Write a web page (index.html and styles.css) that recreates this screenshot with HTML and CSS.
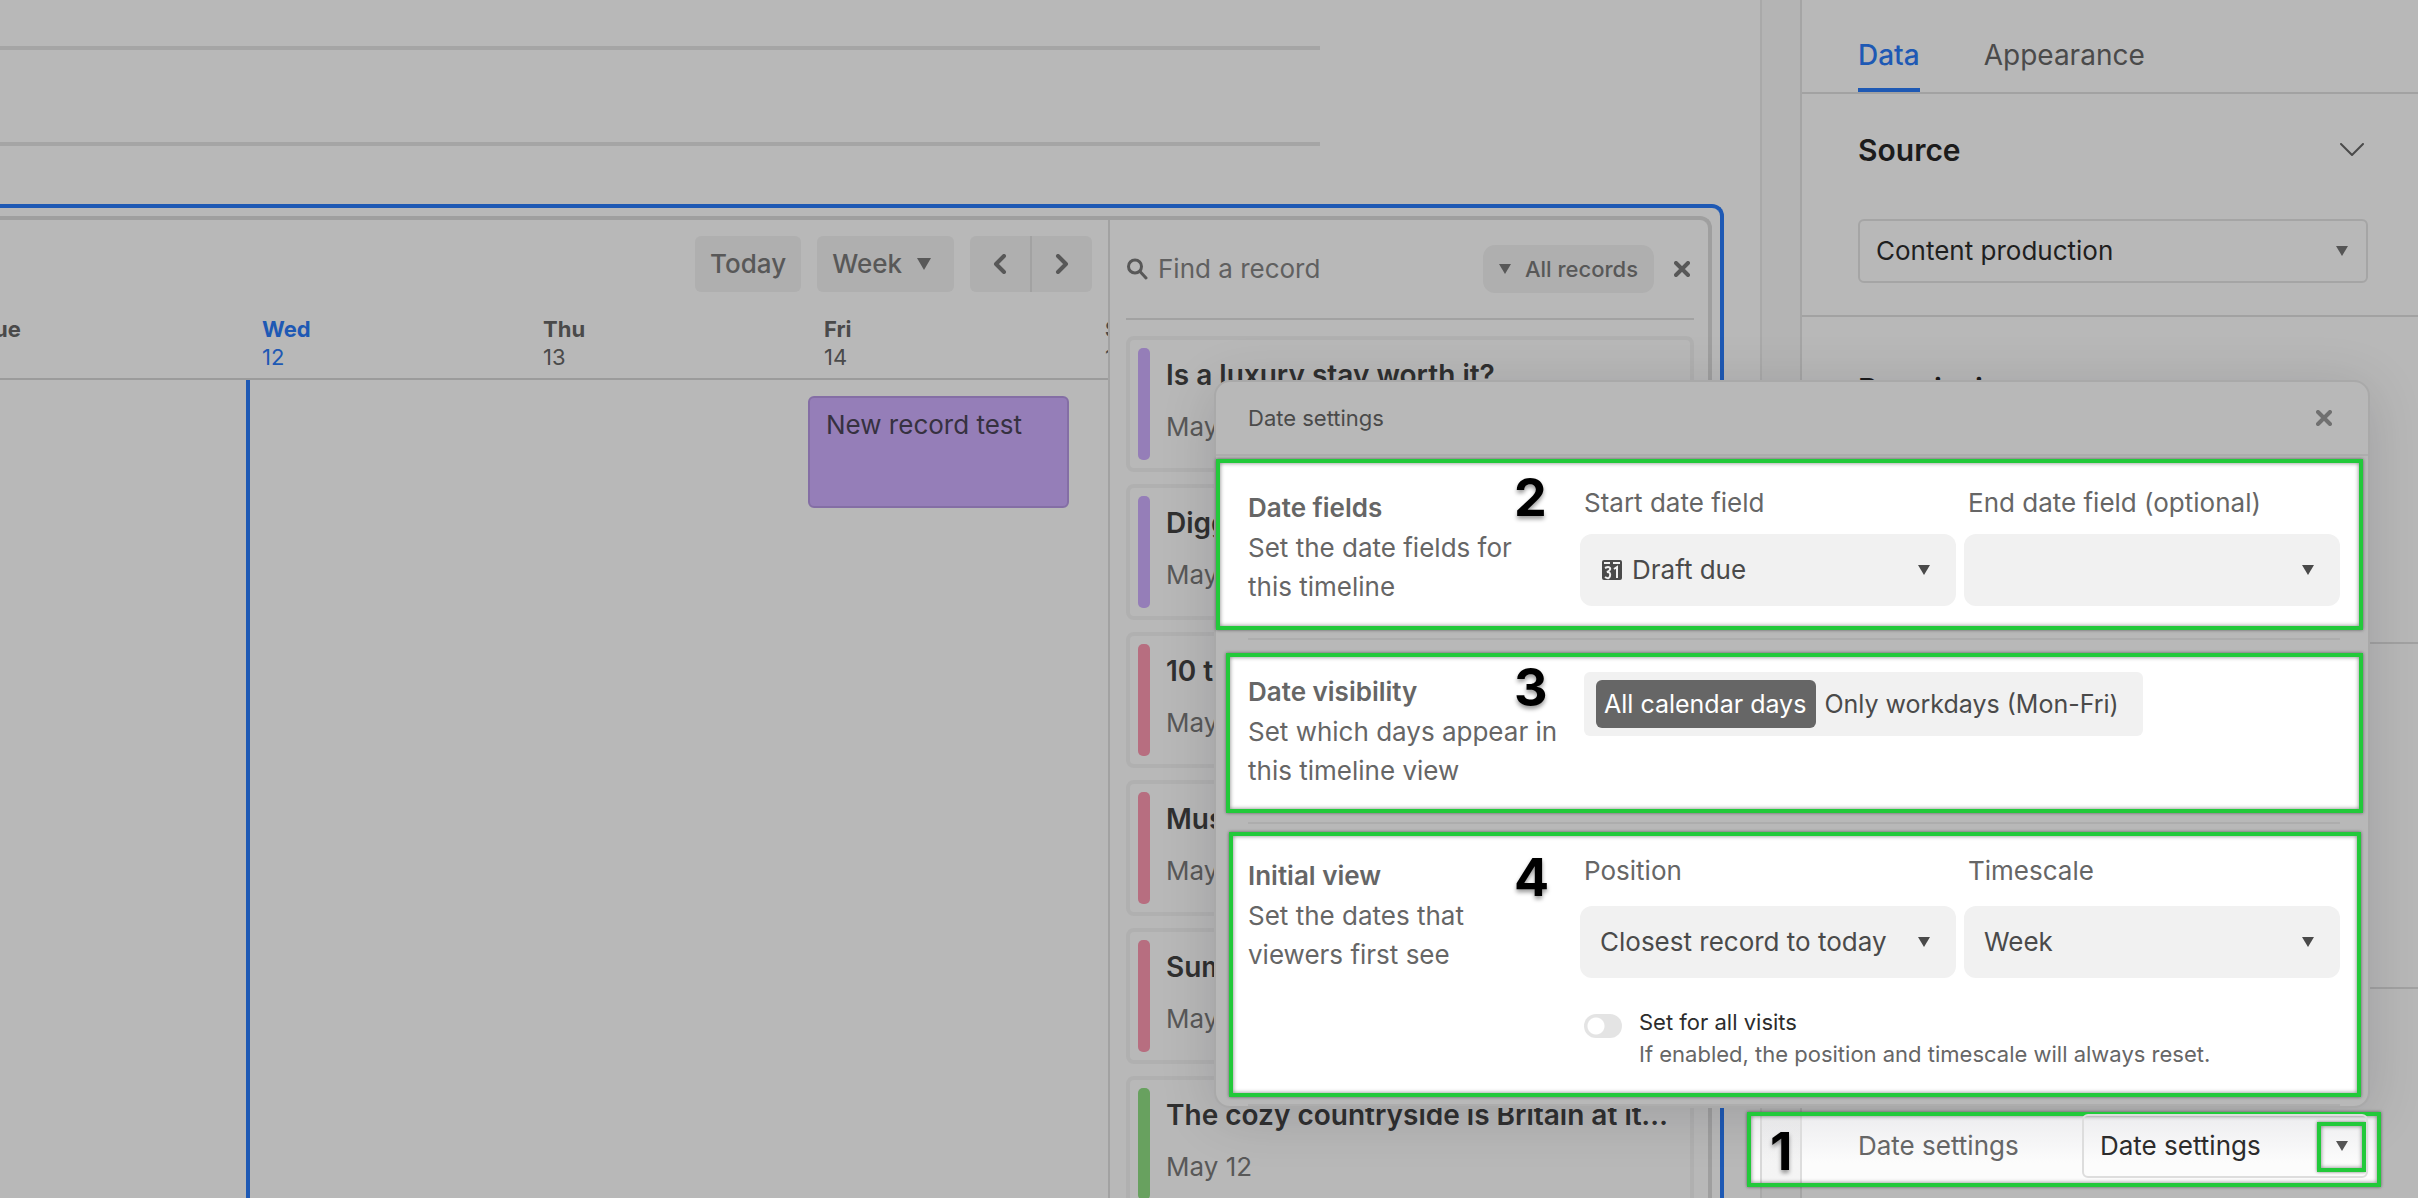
FILE: index.html
```
<!DOCTYPE html>
<html lang="en">
<head>
    <meta charset="UTF-8">
    <title>Timeline settings</title>
    <link rel="stylesheet" href="styles.css">
</head>
<body>
<div class="app">
    <main class="canvas">
        <div class="page">
            <div class="line"></div>
            <div class="line"></div>

            <div class="selected">
                <div class="timeline">
                    <section class="calendar">
                        <div class="toolbar">
                            <button class="btn">Today</button>
                            <button class="btn week">Week
                                <svg width="16" height="12" viewBox="0 0 16 12"><path d="M1 0h14L8 12z"/></svg>
                            </button>
                            <div class="nav">
                                <button aria-label="Previous">
                                    <svg width="14" height="20" viewBox="0 0 14 20"><path class="stroke" d="M11 2L3 10l8 8"/></svg>
                                </button>
                                <button aria-label="Next">
                                    <svg width="14" height="20" viewBox="0 0 14 20"><path class="stroke" d="M3 2l8 8-8 8"/></svg>
                                </button>
                            </div>
                        </div>
                        <div class="days">
                            <div class="day"><b>Tue</b>11</div>
                            <div class="day today"><b>Wed</b>12</div>
                            <div class="day"><b>Thu</b>13</div>
                            <div class="day"><b>Fri</b>14</div>
                            <div class="day"><b>Sat</b>15</div>
                        </div>
                        <div class="columns">
                            <div class="column"></div>
                            <div class="column now"></div>
                            <div class="column"></div>
                            <div class="column">
                                <div class="event">New record test</div>
                            </div>
                        </div>
                    </section>

                    <aside class="records">
                        <div class="search">
                            <svg width="22" height="22" viewBox="0 0 22 22"><circle class="stroke" cx="9" cy="8.5" r="6.5"/><path class="stroke" d="M14 13.5L20 20"/></svg>
                            <input type="text" placeholder="Find a record" aria-label="Find a record">
                            <button class="filter">
                                <svg width="12" height="10" viewBox="0 0 12 10"><path d="M0 0h12L6 10z"/></svg>
                                All records
                            </button>
                            <button class="close" aria-label="Close">
                                <svg width="16" height="16" viewBox="0 0 16 16"><path class="stroke" d="M2 2l12 12M14 2L2 14"/></svg>
                            </button>
                        </div>
                        <ul class="cards">
                            <li class="purple"><div><h3>Is a luxury stay worth it?</h3><p>May 12</p></div></li>
                            <li class="purple"><div><h3>Diggs</h3><p>May 7</p></div></li>
                            <li class="red"><div><h3>10 tips</h3><p>May 7</p></div></li>
                            <li class="red"><div><h3>Muse</h3><p>May 7</p></div></li>
                            <li class="red"><div><h3>Sumo</h3><p>May 7</p></div></li>
                            <li class="green"><div><h3>The cozy countryside is Britain at its best</h3><p>May 12</p></div></li>
                        </ul>
                    </aside>
                </div>
            </div>
        </div>
    </main>

    <aside class="panel">
        <nav class="tabs">
            <a href="#" class="current">Data</a>
            <a href="#">Appearance</a>
        </nav>
        <section class="group">
            <div class="group-head">
                <h2>Source</h2>
                <svg width="24" height="14" viewBox="0 0 24 14"><path class="stroke" d="M1 1l11 11L23 1"/></svg>
            </div>
            <div class="select">
                <select aria-label="Source">
                    <option>Content production</option>
                </select>
                <svg width="12" height="10" viewBox="0 0 12 10"><path d="M0 0h12L6 10z"/></svg>
            </div>
        </section>
        <section class="group permissions">
            <h2>Permissions</h2>
        </section>
        <section class="group options"></section>

        <div class="date-row">
            <div class="mark mark-row"></div>
            <span class="number">1</span>
            <label for="dates">Date settings</label>
            <div class="select">
                <select id="dates">
                    <option>Date settings</option>
                </select>
                <svg width="12" height="10" viewBox="0 0 12 10"><path d="M0 0h12L6 10z"/></svg>
                <div class="mark mark-arrow"></div>
            </div>
        </div>

        <div class="popup">
            <header>
                <h4>Date settings</h4>
                <button class="close" aria-label="Close">
                    <svg width="16" height="16" viewBox="0 0 16 16"><path class="stroke" d="M2 2l12 12M14 2L2 14"/></svg>
                </button>
            </header>

            <section class="setting">
                <div class="mark mark-fields"></div>
                <span class="number">2</span>
                <div class="about">
                    <h5>Date fields</h5>
                    <p>Set the date fields for this timeline</p>
                </div>
                <div class="fields">
                    <div class="field">
                        <label for="start">Start date field</label>
                        <div class="drop with-icon">
                            <svg class="cal" width="20" height="20" viewBox="0 0 20 20">
                                <path d="M2 0h16a2 2 0 0 1 2 2v16a2 2 0 0 1-2 2H2a2 2 0 0 1-2-2V2a2 2 0 0 1 2-2z"/>
                                <path class="cut" d="M2 3h6M11 3h7M3 8q4-2 5 0t-3 4q4 0 3 4t-5 1M12 9l3-2v11"/>
                            </svg>
                            <select id="start"><option>Draft due</option></select>
                            <svg width="12" height="10" viewBox="0 0 12 10"><path d="M0 0h12L6 10z"/></svg>
                        </div>
                    </div>
                    <div class="field">
                        <label for="end">End date field (optional)</label>
                        <div class="drop">
                            <select id="end"><option></option></select>
                            <svg width="12" height="10" viewBox="0 0 12 10"><path d="M0 0h12L6 10z"/></svg>
                        </div>
                    </div>
                </div>
            </section>

            <section class="setting visibility">
                <div class="mark mark-visibility"></div>
                <span class="number">3</span>
                <div class="about">
                    <h5>Date visibility</h5>
                    <p>Set which days appear in this timeline view</p>
                </div>
                <div class="segments">
                    <label><input type="radio" name="days" checked><span>All calendar days</span></label>
                    <label><input type="radio" name="days"><span>Only workdays (Mon-Fri)</span></label>
                </div>
            </section>

            <section class="setting initial">
                <div class="mark mark-initial"></div>
                <span class="number">4</span>
                <div class="about">
                    <h5>Initial view</h5>
                    <p>Set the dates that viewers first see</p>
                </div>
                <div>
                    <div class="fields">
                        <div class="field">
                            <label for="position">Position</label>
                            <div class="drop">
                                <select id="position"><option>Closest record to today</option></select>
                                <svg width="12" height="10" viewBox="0 0 12 10"><path d="M0 0h12L6 10z"/></svg>
                            </div>
                        </div>
                        <div class="field">
                            <label for="scale">Timescale</label>
                            <div class="drop">
                                <select id="scale"><option>Week</option></select>
                                <svg width="12" height="10" viewBox="0 0 12 10"><path d="M0 0h12L6 10z"/></svg>
                            </div>
                        </div>
                    </div>
                    <div class="visits">
                        <input type="checkbox" id="visits">
                        <label for="visits">Set for all visits
                            <small>If enabled, the position and timescale will always reset.</small>
                        </label>
                    </div>
                </div>
            </section>
        </div>
    </aside>
</div>
</body>
</html>
```
FILE: styles.css
```
* {
    padding: 0;
    margin: 0;
    box-sizing: border-box;
    list-style: none;
}

body {
    font: 26px/32px Inter, "Liberation Sans", sans-serif;
    color: #4a4a4a;
    background: #b8b8b8;
}

button, input, select {
    font: inherit;
    color: inherit;
    border: 0;
    background: none;
}

a {
    color: inherit;
    text-decoration: none;
}

svg {
    display: block;
    flex: none;
    fill: currentColor;
}

.stroke {
    fill: none;
    stroke: currentColor;
    stroke-width: 3;
    stroke-linecap: round;
    stroke-linejoin: round;
}

.app {
    display: flex;
    height: 100vh;
    overflow: hidden;
}

/* canvas */
.canvas {
    flex: 1;
    min-width: 0;
    display: flex;
    padding-right: 40px;
    background: #b4b4b4;
}

.page {
    flex: 1;
    min-width: 0;
    display: flex;
    flex-direction: column;
    padding: 46px 36px 0 0;
    background: #b8b8b8;
    box-shadow: 0 0 0 2px #a9a9a9;
}

.line {
    flex: none;
    height: 4px;
    margin: 0 404px 92px 0;
    background: #a5a5a5;
}

.selected {
    flex: 1;
    min-height: 0;
    display: flex;
    margin-top: -34px;
    padding: 8px 8px 0 0;
    border: 4px solid #1e59b4;
    border-width: 4px 4px 0 0;
    border-radius: 0 12px 0 0;
}

.timeline {
    flex: 1;
    min-width: 0;
    display: flex;
    border: 4px solid #9f9f9f;
    border-width: 4px 4px 0 0;
    border-radius: 0 12px 0 0;
}

.calendar {
    flex: 1;
    min-width: 0;
    display: flex;
    flex-direction: column;
    overflow: hidden;
    border-right: 2px solid #a2a2a2;
}

.toolbar {
    display: flex;
    justify-content: flex-end;
    gap: 16px;
    padding: 16px;
    font-weight: 500;
    color: #585858;
}

.btn {
    height: 56px;
    padding: 0 15px;
    border-radius: 6px;
    background: #afafaf;
}

.week {
    display: flex;
    align-items: center;
    gap: 14px;
    padding-right: 22px;
}

.nav {
    display: flex;
    width: 122px;
    border-radius: 6px;
    background: #afafaf;
}

.nav button {
    flex: 1;
    display: flex;
    align-items: center;
    justify-content: center;
}

.nav button + button {
    border-left: 2px solid #a2a2a2;
}

.nav .stroke, .close .stroke {
    stroke-width: 4;
}

.days, .columns {
    display: flex;
    margin-left: -35px;
}

.days {
    padding: 7px 0;
    font-size: 22px;
    line-height: 28px;
    border-bottom: 2px solid #9b9b9b;
}

.day {
    flex: none;
    width: 281px;
    padding-left: 16px;
}

.day b {
    display: block;
    font-weight: 700;
}

.today {
    color: #1e59b4;
}

.columns {
    flex: 1;
}

.column {
    flex: none;
    width: 281px;
    padding-top: 16px;
}

.now {
    border-left: 4px solid #1e59b4;
}

.event {
    width: 261px;
    height: 112px;
    padding: 11px 16px;
    color: #363140;
    border: 2px solid #846ea5;
    border-radius: 6px;
    background: #957eb8;
}

/* records */
.records {
    flex: none;
    width: 598px;
    padding: 0 14px 0 16px;
}

.search {
    display: flex;
    align-items: center;
    height: 100px;
    padding-right: 4px;
    border-bottom: 2px solid #a2a2a2;
    color: #585858;
}

.search input {
    flex: 1;
    min-width: 0;
    margin-left: 10px;
    outline: 0;
}

.search input::placeholder {
    color: #606060;
    opacity: 1;
}

.filter {
    display: flex;
    align-items: center;
    gap: 14px;
    height: 48px;
    padding: 0 16px;
    margin-right: 20px;
    font-size: 22px;
    font-weight: 500;
    border-radius: 12px;
    background: #afafaf;
}

.cards {
    padding-top: 16px;
}

.cards li {
    display: flex;
    gap: 16px;
    height: 136px;
    padding: 8px 14px 8px 8px;
    margin-bottom: 12px;
    border: 4px solid #b0b0b0;
    border-radius: 8px;
}

.cards li::before {
    content: "";
    flex: none;
    width: 12px;
    border-radius: 5px;
}

.cards .purple::before {
    background: #957eb8;
}

.cards .red::before {
    background: #b76e80;
}

.cards .green::before {
    background: #68a15f;
}

.cards div {
    min-width: 0;
}

.cards h3 {
    padding-top: 11px;
    margin-bottom: 20px;
    font-size: 28px;
    font-weight: 600;
    color: #303030;
    white-space: nowrap;
    overflow: hidden;
    text-overflow: ellipsis;
}

.cards p {
    color: #585858;
}

/* panel */
.panel {
    position: relative;
    display: flex;
    flex-direction: column;
    flex: none;
    width: 618px;
    border-left: 2px solid #a5a5a5;
}

.tabs {
    display: flex;
    gap: 64px;
    height: 94px;
    padding: 0 56px;
    font-size: 28px;
    line-height: 110px;
    border-bottom: 2px solid #a2a2a2;
}

.tabs a {
    height: 92px;
    overflow: hidden;
}

.tabs .current {
    color: #1e59b4;
    font-weight: 500;
    border-bottom: 4px solid #1e59b4;
}

.group {
    padding: 36px 50px 32px 56px;
    border-bottom: 2px solid #a2a2a2;
}

.group-head {
    display: flex;
    align-items: center;
    justify-content: space-between;
    padding-right: 4px;
    margin-bottom: 49px;
}

.group-head .stroke {
    stroke-width: 2;
}

h2 {
    font-size: 30px;
    line-height: 40px;
    font-weight: 600;
    color: #1c1c1c;
}

.permissions {
    height: 327px;
    padding-top: 52px;
}

.options {
    height: 345px;
}

.select {
    position: relative;
    display: flex;
    align-items: center;
    border: 2px solid #a5a5a5;
    border-radius: 6px;
    color: #555;
}

.select select {
    flex: 1;
    height: 60px;
    padding-left: 16px;
    color: #1f1f1f;
    appearance: none;
}

.select svg {
    margin: 0 18px 0 -30px;
    pointer-events: none;
}

/* highlighted parts and their numbers */
.mark {
    position: absolute;
    z-index: -1;
    border: 4px solid #22c93a;
    background: #fff;
    box-shadow: 0 0 3px rgba(0, 0, 0, .5), inset 0 0 4px rgba(0, 0, 0, .5);
}

.number {
    position: absolute;
    font-size: 52px;
    line-height: 60px;
    font-weight: 700;
    color: #000;
    text-shadow: 0 3px 4px rgba(0, 0, 0, .4);
}

.date-row {
    position: relative;
    z-index: 2;
    display: flex;
    align-items: center;
    justify-content: space-between;
    margin: 125px 50px 0 56px;
    color: #666;
}

.date-row .select {
    width: 286px;
    border-color: #ddd;
}

.date-row .select select {
    color: #2c2c2c;
}

.date-row .number {
    left: -88px;
    top: 8px;
}

.mark-row {
    inset: -2px -13px -9px -111px;
    background: linear-gradient(90deg, transparent 9px, #d8d8d8 9px 11px, rgba(0, 0, 0, .03) 11px 49px, #ddd 49px 51px, transparent 51px), linear-gradient(#ededef, #fcfcfc 70%);
}

.mark-arrow {
    inset: 6px 0 4px auto;
    width: 49px;
    background: none;
    pointer-events: none;
}

/* date settings popup */
.popup {
    position: absolute;
    z-index: 1;
    top: 380px;
    right: 48px;
    width: 1156px;
    border: 2px solid #a9a9a9;
    border-radius: 16px;
    background: #b8b8b8;
    box-shadow: 0 8px 56px rgba(0, 0, 20, .14);
}

.popup header {
    display: flex;
    align-items: center;
    justify-content: space-between;
    height: 74px;
    padding: 0 36px 0 32px;
    border-bottom: 2px solid #adadad;
}

.popup h4 {
    font-size: 22px;
    font-weight: 400;
}

.popup .close {
    color: #707070;
}

.setting {
    position: relative;
    z-index: 0;
    display: grid;
    grid-template-columns: 332px 1fr;
    margin: 0 28px 0 32px;
    padding: 32px 0;
    color: #666;
    border-bottom: 2px solid #adadad;
}

.about {
    width: 310px;
}

.setting h5 {
    font-size: 26px;
    line-height: 40px;
    font-weight: 600;
}

.about p {
    line-height: 39px;
}

.setting .number {
    left: 266px;
    top: 12px;
}

.visibility .number {
    top: 18px;
}

.initial .number {
    top: 24px;
}

.initial {
    padding-bottom: 34px;
}

.mark-fields {
    inset: 3px -23px 8px -32px;
}

.mark-visibility {
    inset: 13px -23px 9px -22px;
}

.mark-initial {
    inset: 8px -21px 7px -19px;
}

.fields {
    display: grid;
    grid-template-columns: 1fr 1fr;
    gap: 8px;
}

.field label {
    display: block;
    padding-left: 4px;
    margin-bottom: 16px;
    line-height: 30px;
}

.initial .field label {
    margin-bottom: 20px;
}

.drop {
    display: flex;
    align-items: center;
    height: 72px;
    border-radius: 12px;
    background: #f1f1f1;
    color: #4a4a4a;
}

.drop select {
    flex: 1;
    min-width: 0;
    height: 72px;
    padding-left: 20px;
    appearance: none;
}

.drop svg {
    margin: 0 26px 0 -38px;
    pointer-events: none;
}

.drop .cal {
    margin: 0 -42px 0 22px;
}

.with-icon select {
    padding-left: 52px;
}

.cut {
    fill: none;
    stroke: #f1f1f1;
    stroke-width: 2;
}

.segments {
    display: flex;
    justify-self: start;
    align-self: start;
    margin-left: 4px;
    padding: 8px 14px 8px 12px;
    border-radius: 6px;
    font-size: 25px;
    background: #f1f1f1;
    color: #4a4a4a;
}

.segments input {
    position: absolute;
    opacity: 0;
}

.segments span {
    display: block;
    padding: 0 10px 0 8px;
    line-height: 48px;
    border-radius: 6px;
}

.segments input:checked + span {
    color: #fff;
    background: #666;
}

.visits {
    display: flex;
    gap: 17px;
    margin: 28px 0 0 4px;
    font-size: 22px;
    color: #2c2c2c;
}

.visits input {
    flex: none;
    width: 38px;
    height: 24px;
    margin-top: 8px;
    border-radius: 12px;
    background: radial-gradient(circle at 12px 12px, #fff 8px, #e4e4e4 9px);
    appearance: none;
}

.visits small {
    display: block;
    font-size: 22px;
    color: #666;
}
```
